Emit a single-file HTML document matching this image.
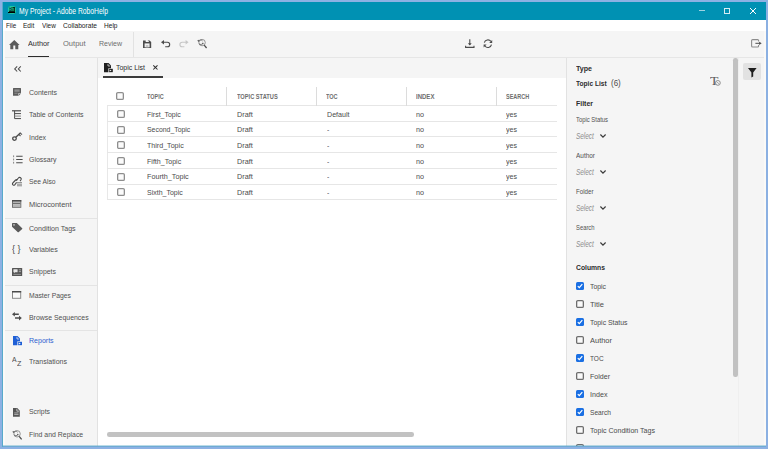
<!DOCTYPE html>
<html><head><meta charset="utf-8"><title>My Project - Adobe RoboHelp</title>
<style>
*{box-sizing:border-box;margin:0;padding:0}
html,body{width:768px;height:449px;overflow:hidden;background:#8db1e3;font-family:"Liberation Sans",sans-serif;color:#4b4b4b}
.a{position:absolute}
.tx{position:absolute;white-space:nowrap;line-height:normal;transform-origin:0 50%}
#win{position:absolute;left:2.5px;top:2px;width:763px;height:443.5px;background:#f5f5f5}
.cb{position:absolute;width:8px;height:8px;border:1px solid #8a8a8a;border-radius:1.5px;background:#fff}
.cbr{position:absolute;width:8px;height:8px;border:1px solid #6e6e6e;border-radius:1.5px;background:#fafafa}
.cbc{position:absolute;width:8px;height:8px;border-radius:1.5px;background:#1a6fe3}
.hl{position:absolute;height:1px;background:#e4e4e4}
.vl{position:absolute;width:1px;background:#e4e4e4}
svg{position:absolute;overflow:visible}
</style></head><body>
<!-- window chrome -->
<div id="win"></div>
<div class="a" id="titlebar" style="left:2.5px;top:2px;width:763px;height:17.5px;background:#0091b3"></div>
<div class="a" id="menubar" style="left:2.5px;top:19.5px;width:763px;height:11.5px;background:#fff"></div>
<div class="a" id="toolbar" style="left:2.5px;top:31px;width:763px;height:26px;background:#f5f5f5"></div>
<div class="hl" style="left:2.5px;top:57px;width:763px;background:#e6e6e6"></div>
<!-- app icon -->
<div class="a" style="left:7.6px;top:6.3px;width:8.4px;height:7.8px;background:#06281f;border:1px solid #1cc6a4;border-radius:1.5px"></div>
<!-- window buttons -->
<div class="a" style="left:8.4px;top:11.9px;width:6.8px;height:1.4px;background:#000"></div>
<div class="a" style="left:698.7px;top:10.4px;width:6px;height:1px;background:#9fd3e2"></div>
<div class="a" style="left:723.7px;top:7.8px;width:6px;height:6px;border:1px solid #d4ecf3"></div>
<svg style="left:749.5px;top:7.8px" width="6" height="6" viewBox="0 0 6 6"><path d="M0 0L6 6M6 0L0 6" stroke="#fff" stroke-width="1" fill="none"/></svg>
<!-- toolbar -->
<div class="a" style="left:27.5px;top:55.6px;width:21.7px;height:1.9px;background:#2c2c2c"></div>
<div class="vl" style="left:133px;top:32px;height:25px;background:#e2e2e2"></div>
<!-- sidebar -->
<div class="vl" style="left:97px;top:58px;height:387.5px;background:#e2e2e2"></div>
<div class="hl" style="left:3px;top:218px;width:94px"></div>
<div class="hl" style="left:3px;top:285.3px;width:94px"></div>
<div class="hl" style="left:3px;top:330px;width:94px"></div>
<!-- center -->
<div class="a" id="main" style="left:98px;top:78px;width:468px;height:367.5px;background:#fff"></div>
<div class="a" style="left:103px;top:75.6px;width:59.5px;height:2px;background:#3c3c3c"></div>
<!-- table -->
<div class="a" id="tbl" style="left:107px;top:87px;width:450px;height:114px;overflow:hidden">
 <div class="vl" style="left:0.3px;top:18.5px;height:94.5px;background:#e8e8e8"></div>
</div>
<div class="hl" style="left:107px;top:105.0px;width:450px;background:#e6e6e6"></div>
<div class="hl" style="left:107px;top:120.7px;width:450px;background:#e6e6e6"></div>
<div class="hl" style="left:107px;top:136.4px;width:450px;background:#e6e6e6"></div>
<div class="hl" style="left:107px;top:152.1px;width:450px;background:#e6e6e6"></div>
<div class="hl" style="left:107px;top:167.8px;width:450px;background:#e6e6e6"></div>
<div class="hl" style="left:107px;top:183.5px;width:450px;background:#e6e6e6"></div>
<div class="hl" style="left:107px;top:199.2px;width:450px;background:#e6e6e6"></div>
<div class="vl" style="left:226.0px;top:87px;height:18.5px;background:#dcdcdc"></div>
<div class="vl" style="left:315.8px;top:87px;height:18.5px;background:#dcdcdc"></div>
<div class="vl" style="left:405.8px;top:87px;height:18.5px;background:#dcdcdc"></div>
<div class="vl" style="left:495.5px;top:87px;height:18.5px;background:#dcdcdc"></div>
<svg style="left:116.2px;top:92.2px" width="8" height="8" viewBox="0 0 8 8"><rect x="0.65" y="0.65" width="6.7" height="6.7" rx="1.2" fill="#fbfbfb" stroke="#8e8e8e" stroke-width="1.3"/></svg>
<svg style="left:116.5px;top:109.8px" width="8" height="8" viewBox="0 0 8 8"><rect x="0.65" y="0.65" width="6.7" height="6.7" rx="1.2" fill="#fbfbfb" stroke="#8e8e8e" stroke-width="1.3"/></svg>
<svg style="left:116.5px;top:125.5px" width="8" height="8" viewBox="0 0 8 8"><rect x="0.65" y="0.65" width="6.7" height="6.7" rx="1.2" fill="#fbfbfb" stroke="#8e8e8e" stroke-width="1.3"/></svg>
<svg style="left:116.5px;top:141.2px" width="8" height="8" viewBox="0 0 8 8"><rect x="0.65" y="0.65" width="6.7" height="6.7" rx="1.2" fill="#fbfbfb" stroke="#8e8e8e" stroke-width="1.3"/></svg>
<svg style="left:116.5px;top:156.9px" width="8" height="8" viewBox="0 0 8 8"><rect x="0.65" y="0.65" width="6.7" height="6.7" rx="1.2" fill="#fbfbfb" stroke="#8e8e8e" stroke-width="1.3"/></svg>
<svg style="left:116.5px;top:172.6px" width="8" height="8" viewBox="0 0 8 8"><rect x="0.65" y="0.65" width="6.7" height="6.7" rx="1.2" fill="#fbfbfb" stroke="#8e8e8e" stroke-width="1.3"/></svg>
<svg style="left:116.5px;top:188.3px" width="8" height="8" viewBox="0 0 8 8"><rect x="0.65" y="0.65" width="6.7" height="6.7" rx="1.2" fill="#fbfbfb" stroke="#8e8e8e" stroke-width="1.3"/></svg>
<!-- bottom scrollbar -->
<div class="a" style="left:107px;top:432px;width:307px;height:4.5px;border-radius:2.25px;background:#c2c2c2"></div>
<!-- right panel -->
<div class="vl" style="left:566px;top:58px;height:387.5px;background:#e2e2e2"></div>
<div class="vl" style="left:738px;top:58px;height:387.5px;background:#efefef"></div>
<div class="a" style="left:733.2px;top:58.4px;width:4.4px;height:318.6px;border-radius:2.2px;background:#c1c1c1"></div>
<div class="a" style="left:743.2px;top:63px;width:17.8px;height:17.3px;border-radius:2px;background:#e2e2e2"></div>
<div class="cbc" style="left:576px;top:282px"></div><svg style="left:576px;top:282px" width="8" height="8" viewBox="0 0 8 8"><path d="M1.8 4.1L3.3 5.7L6.3 2.2" stroke="#fff" stroke-width="1.2" fill="none"/></svg>
<svg style="left:576px;top:300px" width="8" height="8" viewBox="0 0 8 8"><rect x="0.65" y="0.65" width="6.7" height="6.7" rx="1.2" fill="#fafafa" stroke="#6e6e6e" stroke-width="1.3"/></svg>
<div class="cbc" style="left:576px;top:318px"></div><svg style="left:576px;top:318px" width="8" height="8" viewBox="0 0 8 8"><path d="M1.8 4.1L3.3 5.7L6.3 2.2" stroke="#fff" stroke-width="1.2" fill="none"/></svg>
<svg style="left:576px;top:336px" width="8" height="8" viewBox="0 0 8 8"><rect x="0.65" y="0.65" width="6.7" height="6.7" rx="1.2" fill="#fafafa" stroke="#6e6e6e" stroke-width="1.3"/></svg>
<div class="cbc" style="left:576px;top:354px"></div><svg style="left:576px;top:354px" width="8" height="8" viewBox="0 0 8 8"><path d="M1.8 4.1L3.3 5.7L6.3 2.2" stroke="#fff" stroke-width="1.2" fill="none"/></svg>
<svg style="left:576px;top:372px" width="8" height="8" viewBox="0 0 8 8"><rect x="0.65" y="0.65" width="6.7" height="6.7" rx="1.2" fill="#fafafa" stroke="#6e6e6e" stroke-width="1.3"/></svg>
<div class="cbc" style="left:576px;top:390px"></div><svg style="left:576px;top:390px" width="8" height="8" viewBox="0 0 8 8"><path d="M1.8 4.1L3.3 5.7L6.3 2.2" stroke="#fff" stroke-width="1.2" fill="none"/></svg>
<div class="cbc" style="left:576px;top:408px"></div><svg style="left:576px;top:408px" width="8" height="8" viewBox="0 0 8 8"><path d="M1.8 4.1L3.3 5.7L6.3 2.2" stroke="#fff" stroke-width="1.2" fill="none"/></svg>
<svg style="left:576px;top:426px" width="8" height="8" viewBox="0 0 8 8"><rect x="0.65" y="0.65" width="6.7" height="6.7" rx="1.2" fill="#fafafa" stroke="#6e6e6e" stroke-width="1.3"/></svg>
<svg style="left:576px;top:444px" width="8" height="8" viewBox="0 0 8 8"><rect x="0.65" y="0.65" width="6.7" height="6.7" rx="1.2" fill="#fafafa" stroke="#6e6e6e" stroke-width="1.3"/></svg>
<svg style="left:600.1px;top:133.8px" width="6" height="3.8" viewBox="0 0 6 3.8"><path d="M0.4 0.5L3 3.1L5.6 0.5" stroke="#3c3c3c" stroke-width="1.2" fill="none"/></svg>
<svg style="left:600.1px;top:169.9px" width="6" height="3.8" viewBox="0 0 6 3.8"><path d="M0.4 0.5L3 3.1L5.6 0.5" stroke="#3c3c3c" stroke-width="1.2" fill="none"/></svg>
<svg style="left:600.1px;top:205.9px" width="6" height="3.8" viewBox="0 0 6 3.8"><path d="M0.4 0.5L3 3.1L5.6 0.5" stroke="#3c3c3c" stroke-width="1.2" fill="none"/></svg>
<svg style="left:600.1px;top:241.9px" width="6" height="3.8" viewBox="0 0 6 3.8"><path d="M0.4 0.5L3 3.1L5.6 0.5" stroke="#3c3c3c" stroke-width="1.2" fill="none"/></svg>
<!-- home -->
<svg style="left:8.8px;top:39.5px" width="10.6" height="9.2" viewBox="0 0 10.6 9.2"><path d="M5.3 0L10.6 4.9H9.3V9.2H6.3V5.6H4.3V9.2H1.3V4.9H0Z" fill="#5a5a5a"/></svg>
<!-- save -->
<svg style="left:143.4px;top:39.7px" width="8.2" height="8" viewBox="0 0 8.2 8"><path d="M0 0.4H6.6L8.2 2V8H0Z" fill="#4b4b4b"/><rect x="2.7" y="0" width="3.2" height="2" fill="#f5f5f5"/><rect x="4.9" y="0.3" width="0.8" height="0.9" fill="#4b4b4b"/><rect x="1.6" y="3.4" width="5" height="3.9" fill="#efefef"/><rect x="2.8" y="5" width="2.6" height="2.3" fill="#c4c4c4"/></svg>
<!-- undo -->
<svg style="left:160.8px;top:39.8px" width="9.6" height="7.4" viewBox="0 0 9.6 7.4"><path d="M2 2.2H6.4A2.3 2.3 0 0 1 6.4 6.8H4.2" fill="none" stroke="#4b4b4b" stroke-width="1.1"/><path d="M0 2.2L3 0V4.4Z" fill="#4b4b4b"/></svg>
<!-- redo -->
<svg style="left:178.6px;top:39.8px" width="9.6" height="7.4" viewBox="0 0 9.6 7.4"><path d="M7.6 2.2H3.2A2.3 2.3 0 0 0 3.2 6.8H5.4" fill="none" stroke="#c6c6c6" stroke-width="1.1"/><path d="M9.6 2.2L6.6 0V4.4Z" fill="#c6c6c6"/></svg>
<!-- find replace toolbar -->
<svg style="left:196.6px;top:39.2px" width="10" height="9.6" viewBox="0 0 10 9.6"><circle cx="5.1" cy="3.6" r="3.2" fill="none" stroke="#8a8a8a" stroke-width="0.9"/><path d="M7.2 6.2L9.6 9" stroke="#4b4b4b" stroke-width="1.3" fill="none"/><path d="M1.4 2.6A2.4 2.4 0 0 1 5.6 2M6 3.8A2.4 2.4 0 0 1 1.8 4.6" stroke="#6e6e6e" stroke-width="0.9" fill="none"/><path d="M0.2 1.6L2 0.8L1.8 2.9Z" fill="#5a5a5a"/><path d="M6.9 4.8L5.2 5.4L5.4 3.4Z" fill="#5a5a5a"/></svg>
<!-- download -->
<svg style="left:465.3px;top:39px" width="9.6" height="9.2" viewBox="0 0 9.6 9.2"><path d="M4.8 0.2V5.8" stroke="#4b4b4b" stroke-width="1.1" fill="none"/><path d="M2.9 4.2L4.8 6.6L6.7 4.2Z" fill="#4b4b4b"/><path d="M0.6 6.8V8.4H9V6.8" stroke="#4b4b4b" stroke-width="1.1" fill="none"/></svg>
<!-- refresh -->
<svg style="left:483.2px;top:39px" width="9.8" height="9.4" viewBox="0 0 9.8 9.4"><path d="M1.3 3.7A3.7 3.7 0 0 1 7.9 2.4M8.5 5.6A3.7 3.7 0 0 1 1.9 7" stroke="#4b4b4b" stroke-width="1.1" fill="none"/><path d="M9.2 0.9V3.9H6.2Z" fill="#4b4b4b"/><path d="M0.6 8.5V5.5H3.6Z" fill="#4b4b4b"/></svg>
<!-- logout -->
<svg style="left:751px;top:39.4px" width="11" height="8.6" viewBox="0 0 11 8.6"><path d="M7.6 2.6V1.6A1 1 0 0 0 6.6 0.6H1.6A1 1 0 0 0 0.6 1.6V7A1 1 0 0 0 1.6 8H6.6A1 1 0 0 0 7.6 7V6" fill="none" stroke="#8c8c8c" stroke-width="1.1"/><path d="M4.4 4.3H9" stroke="#4b4b4b" stroke-width="1" fill="none"/><path d="M8.2 2.7L10.7 4.3L8.2 5.9Z" fill="#4b4b4b"/></svg>
<!-- collapse chevrons -->
<svg style="left:13.8px;top:66.2px" width="7.4" height="5.8" viewBox="0 0 7.4 5.8"><path d="M3.2 0.3L0.7 2.9L3.2 5.5M6.8 0.3L4.3 2.9L6.8 5.5" fill="none" stroke="#4b4b4b" stroke-width="1.05"/></svg>
<!-- tab icon (report, black) -->
<svg style="left:104.2px;top:63px" width="8.8" height="9.2" viewBox="0 0 8.8 9.2"><path d="M0 0H4.6L7 2.4V5.2H4.4V9.2H0Z" fill="#1e1e1e"/><path d="M4 0.8V3H6.2" fill="none" stroke="#f5f5f5" stroke-width="0.7"/><path d="M5 5.8H8.8V9.2H5Z" fill="#1e1e1e"/><path d="M5.6 6.4L7.6 7.5L5.6 8.6Z" fill="#f5f5f5"/></svg>
<!-- tab close -->
<svg style="left:152.6px;top:65px" width="4.8" height="4.8" viewBox="0 0 4.8 4.8"><path d="M0.3 0.3L4.5 4.5M4.5 0.3L0.3 4.5" stroke="#2c2c2c" stroke-width="1.05" fill="none"/></svg>
<!-- contents -->
<svg style="left:13px;top:88.2px" width="8" height="7.8" viewBox="0 0 8 7.8"><path d="M0.4 0H7.6A0.4 0.4 0 0 1 8 0.4V5.6L5.8 7.8H0.4A0.4 0.4 0 0 1 0 7.4V0.4A0.4 0.4 0 0 1 0.4 0Z" fill="#5c5c5c"/><rect x="1.4" y="1.4" width="5.2" height="2.4" fill="#8e8e8e"/><rect x="1.4" y="4.8" width="3.2" height="0.8" fill="#9a9a9a"/><path d="M5.6 7.6V5.4H7.9" fill="none" stroke="#f5f5f5" stroke-width="0.6"/></svg>
<!-- toc -->
<svg style="left:12px;top:109.8px" width="9" height="9.2" viewBox="0 0 9 9.2"><path d="M0 0.8H9" stroke="#4b4b4b" stroke-width="1.2" fill="none"/><path d="M2.6 0.8V8.6H9M2.6 3.6H9" stroke="#4b4b4b" stroke-width="1" fill="none"/><path d="M2.6 6.1H9" stroke="#8a8a8a" stroke-width="1" fill="none"/></svg>
<!-- index key -->
<svg style="left:11.6px;top:132px" width="10.4" height="9" viewBox="0 0 10.4 9"><circle cx="2.5" cy="6.6" r="1.8" fill="none" stroke="#4b4b4b" stroke-width="1.3"/><path d="M3.8 5.3L8.6 0.7" stroke="#4b4b4b" stroke-width="1.4" fill="none"/><path d="M8.2 1L10 2.6M6.9 2.5L8.6 4" stroke="#5a5a5a" stroke-width="1.1" fill="none"/></svg>
<!-- glossary -->
<svg style="left:12.6px;top:154.8px" width="9.6" height="9" viewBox="0 0 9.6 9"><path d="M3.2 1.3H9.6M3.2 4.5H9.6M3.2 7.7H9.6" stroke="#4b4b4b" stroke-width="1.1" fill="none"/><path d="M0.6 0.4V2.2M0.6 3.6V5.4M0.6 6.8V8.6" stroke="#7a7a7a" stroke-width="0.9" fill="none"/></svg>
<!-- see also -->
<svg style="left:12.2px;top:176.8px" width="10.2" height="9.8" viewBox="0 0 10.2 9.8"><path d="M4.6 5.4L2.6 8.1A1.5 1.5 0 0 1 0.5 6.3L3.6 3A1.4 1.4 0 0 1 5.4 3" fill="none" stroke="#4b4b4b" stroke-width="1.1"/><path d="M4.2 3.6L6.4 1A1.6 1.6 0 0 1 8.9 3L8 4.2" fill="none" stroke="#4b4b4b" stroke-width="1.1"/><path d="M5 5.6H10M5 7.2H10M5 8.8H10" stroke="#8a8a8a" stroke-width="1" fill="none"/></svg>
<!-- microcontent -->
<svg style="left:12.1px;top:200px" width="9.3" height="7.8" viewBox="0 0 9.3 7.8"><rect x="0.5" y="0.5" width="8.3" height="6.8" fill="#d2d2d2" stroke="#6e6e6e" stroke-width="1"/><rect x="0" y="0" width="9.3" height="1.6" fill="#4b4b4b"/><rect x="1" y="2.7" width="7.3" height="1.5" fill="#6e6e6e"/><rect x="1" y="5.2" width="7.3" height="1.6" fill="#b0b0b0"/></svg>
<!-- condition tags -->
<svg style="left:11.8px;top:223.2px" width="10.4" height="9.4" viewBox="0 0 10.4 9.4"><path d="M0 0.5A0.5 0.5 0 0 1 0.5 0H4.8L10.2 5.2A0.5 0.5 0 0 1 10.2 5.9L6.6 9.2A0.5 0.5 0 0 1 5.9 9.2L0 3.8Z" fill="#5a5a5a"/><circle cx="2" cy="1.9" r="0.8" fill="#cfcfcf"/></svg>
<!-- snippets -->
<svg style="left:11.8px;top:267.6px" width="10.2" height="8" viewBox="0 0 10.2 8"><rect x="0" y="0" width="10.2" height="8" rx="0.5" fill="#555"/><path d="M1.4 1.3H5.6V4.2H3.2L2.2 5.2V4.2H1.4Z" fill="#e6e6e6"/><rect x="6.8" y="1.4" width="2.2" height="0.9" fill="#b0b0b0"/><rect x="6.8" y="3.2" width="2.2" height="0.9" fill="#b0b0b0"/><rect x="1.4" y="5.9" width="7.6" height="0.9" fill="#9a9a9a"/></svg>
<!-- master pages -->
<svg style="left:12.2px;top:291.2px" width="9.2" height="7.8" viewBox="0 0 9.2 7.8"><rect x="0.5" y="0.5" width="8.2" height="6.8" fill="#fafafa" stroke="#8a8a8a" stroke-width="1"/><rect x="0" y="0" width="9.2" height="1.5" fill="#4b4b4b"/></svg>
<!-- browse sequences -->
<svg style="left:12.2px;top:312.2px" width="9.8" height="8.4" viewBox="0 0 9.8 8.4"><path d="M2 2.3H6.8M3 6.1H7.8" stroke="#4b4b4b" stroke-width="1.5" fill="none"/><path d="M0 2.3L2.8 0V4.6Z" fill="#4b4b4b"/><path d="M9.8 6.1L7 3.8V8.4Z" fill="#4b4b4b"/></svg>
<!-- reports (blue) -->
<svg style="left:13.2px;top:335.8px" width="9" height="9.2" viewBox="0 0 9 9.2"><path d="M0 0H4.6L7 2.4V5.2H4.4V9.2H0Z" fill="#1f5fd6"/><path d="M4 0.8V3H6.2" fill="none" stroke="#f5f5f5" stroke-width="0.7"/><path d="M5 5.8H9V9.2H5Z" fill="#1f5fd6"/><path d="M5.7 6.4L7.8 7.5L5.7 8.6Z" fill="#f5f5f5"/></svg>
<!-- scripts -->
<svg style="left:13.3px;top:407.5px" width="6.8" height="8.7" viewBox="0 0 7.6 8.8" preserveAspectRatio="none"><path d="M0 0H4.8L7.6 2.8V8.8H0Z" fill="#555"/><path d="M4.3 0.7V3.2H6.9" fill="none" stroke="#f5f5f5" stroke-width="0.7"/><path d="M1.4 5H6.2M1.4 6.6H6.2" stroke="#c8c8c8" stroke-width="0.8" fill="none"/></svg>
<!-- find and replace sidebar -->
<svg style="left:12px;top:429.6px" width="10" height="9.8" viewBox="0 0 10 9.8"><circle cx="5.1" cy="3.8" r="3.2" fill="none" stroke="#8a8a8a" stroke-width="0.9"/><path d="M7.2 6.4L9.6 9.3" stroke="#4b4b4b" stroke-width="1.3" fill="none"/><path d="M1.4 2.8A2.4 2.4 0 0 1 5.6 2.2M6 4A2.4 2.4 0 0 1 1.8 4.8" stroke="#6e6e6e" stroke-width="0.9" fill="none"/><path d="M0.2 1.8L2 1L1.8 3.1Z" fill="#5a5a5a"/><path d="M6.9 5L5.2 5.6L5.4 3.6Z" fill="#5a5a5a"/></svg>
<!-- funnel -->
<svg style="left:747.8px;top:67.5px" width="8.6" height="9.6" viewBox="0 0 8.6 9.6"><path d="M0 0H8.6L5.2 4.4V8.6L3.4 9.6V4.4Z" fill="#1e1e1e"/></svg>
<!-- T clock circle -->
<svg style="left:715.4px;top:80.4px" width="5.8" height="5.8" viewBox="0 0 5.8 5.8"><circle cx="2.9" cy="2.9" r="2.4" fill="#f5f5f5" stroke="#7a7a7a" stroke-width="0.8"/><path d="M1.6 1.8L4.2 3.9" stroke="#8a8a8a" stroke-width="0.7" fill="none"/></svg>

<span class="tx" id="t0" style="left:19.2px;top:6.00px;font-size:8.6px;color:#ffffff;transform:scaleX(0.7861);">My Project - Adobe RoboHelp</span>
<span class="tx" id="t1" style="left:6.0px;top:21.00px;font-size:7.5px;color:#1a1a1a;transform:scaleX(0.8434);">File</span>
<span class="tx" id="t2" style="left:22.9px;top:21.00px;font-size:7.5px;color:#1a1a1a;transform:scaleX(0.8657);">Edit</span>
<span class="tx" id="t3" style="left:41.6px;top:21.00px;font-size:7.5px;color:#1a1a1a;transform:scaleX(0.8558);">View</span>
<span class="tx" id="t4" style="left:62.6px;top:21.00px;font-size:7.5px;color:#1a1a1a;transform:scaleX(0.8864);">Collaborate</span>
<span class="tx" id="t5" style="left:104.1px;top:21.00px;font-size:7.5px;color:#1a1a1a;transform:scaleX(0.8745);">Help</span>
<span class="tx" id="t6" style="left:27.5px;top:39.00px;font-size:8px;color:#2c2c2c;transform:scaleX(0.9119);">Author</span>
<span class="tx" id="t7" style="left:62.5px;top:39.00px;font-size:8px;color:#6e6e6e;transform:scaleX(0.9411);">Output</span>
<span class="tx" id="t8" style="left:98.8px;top:39.00px;font-size:8px;color:#6e6e6e;transform:scaleX(0.8767);">Review</span>
<span class="tx" id="t9" style="left:115.6px;top:63.00px;font-size:8px;color:#2c2c2c;transform:scaleX(0.8693);">Topic List</span>
<span class="tx" id="t10" style="left:28.8px;top:88.00px;font-size:7.9px;color:#505050;transform:scaleX(0.8863);">Contents</span>
<span class="tx" id="t11" style="left:28.8px;top:110.00px;font-size:7.9px;color:#505050;transform:scaleX(0.8889);">Table of Contents</span>
<span class="tx" id="t12" style="left:28.8px;top:133.00px;font-size:7.9px;color:#505050;transform:scaleX(0.8803);">Index</span>
<span class="tx" id="t13" style="left:28.8px;top:155.00px;font-size:7.9px;color:#505050;transform:scaleX(0.8831);">Glossary</span>
<span class="tx" id="t14" style="left:28.8px;top:177.00px;font-size:7.9px;color:#505050;transform:scaleX(0.8538);">See Also</span>
<span class="tx" id="t15" style="left:28.8px;top:200.00px;font-size:7.9px;color:#505050;transform:scaleX(0.9409);">Microcontent</span>
<span class="tx" id="t16" style="left:28.8px;top:224.00px;font-size:7.9px;color:#505050;transform:scaleX(0.8951);">Condition Tags</span>
<span class="tx" id="t17" style="left:28.8px;top:245.00px;font-size:7.9px;color:#505050;transform:scaleX(0.8913);">Variables</span>
<span class="tx" id="t18" style="left:28.8px;top:267.00px;font-size:7.9px;color:#505050;transform:scaleX(0.8789);">Snippets</span>
<span class="tx" id="t19" style="left:28.8px;top:291.00px;font-size:7.9px;color:#505050;transform:scaleX(0.8626);">Master Pages</span>
<span class="tx" id="t20" style="left:28.8px;top:313.00px;font-size:7.9px;color:#505050;transform:scaleX(0.8765);">Browse Sequences</span>
<span class="tx" id="t21" style="left:28.8px;top:336.00px;font-size:7.9px;color:#2f62d0;transform:scaleX(0.8900);">Reports</span>
<span class="tx" id="t22" style="left:28.8px;top:357.00px;font-size:7.9px;color:#505050;transform:scaleX(0.8902);">Translations</span>
<span class="tx" id="t23" style="left:28.8px;top:407.00px;font-size:7.9px;color:#505050;transform:scaleX(0.8705);">Scripts</span>
<span class="tx" id="t24" style="left:28.8px;top:430.00px;font-size:7.9px;color:#505050;transform:scaleX(0.8762);">Find and Replace</span>
<span class="tx" id="t25" style="left:147.2px;top:93.00px;font-size:6.3px;color:#6e6e6e;font-weight:bold;transform:scaleX(0.8673);">TOPIC</span>
<span class="tx" id="t26" style="left:236.9px;top:93.00px;font-size:6.3px;color:#6e6e6e;font-weight:bold;transform:scaleX(0.9016);">TOPIC STATUS</span>
<span class="tx" id="t27" style="left:326.2px;top:93.00px;font-size:6.3px;color:#6e6e6e;font-weight:bold;transform:scaleX(0.8796);">TOC</span>
<span class="tx" id="t28" style="left:416.2px;top:93.00px;font-size:6.3px;color:#6e6e6e;font-weight:bold;transform:scaleX(0.9558);">INDEX</span>
<span class="tx" id="t29" style="left:505.5px;top:93.00px;font-size:6.3px;color:#6e6e6e;font-weight:bold;transform:scaleX(0.8724);">SEARCH</span>
<span class="tx" id="t30" style="left:147.3px;top:110.00px;font-size:7.8px;color:#4b4b4b;transform:scaleX(0.8965);">First_Topic</span>
<span class="tx" id="t31" style="left:236.8px;top:110.00px;font-size:7.8px;color:#4b4b4b;transform:scaleX(0.9287);">Draft</span>
<span class="tx" id="t32" style="left:326.6px;top:110.00px;font-size:7.8px;color:#4b4b4b;transform:scaleX(0.9102);">Default</span>
<span class="tx" id="t33" style="left:416.4px;top:110.00px;font-size:7.8px;color:#4b4b4b;transform:scaleX(0.9209);">no</span>
<span class="tx" id="t34" style="left:505.8px;top:110.00px;font-size:7.8px;color:#4b4b4b;transform:scaleX(0.9060);">yes</span>
<span class="tx" id="t35" style="left:147.3px;top:125.00px;font-size:7.8px;color:#4b4b4b;transform:scaleX(0.8840);">Second_Topic</span>
<span class="tx" id="t36" style="left:236.8px;top:125.00px;font-size:7.8px;color:#4b4b4b;transform:scaleX(0.9287);">Draft</span>
<span class="tx" id="t37" style="left:326.6px;top:125.00px;font-size:7.8px;color:#4b4b4b;transform:scaleX(0.8814);">-</span>
<span class="tx" id="t38" style="left:416.4px;top:125.00px;font-size:7.8px;color:#4b4b4b;transform:scaleX(0.9209);">no</span>
<span class="tx" id="t39" style="left:505.8px;top:125.00px;font-size:7.8px;color:#4b4b4b;transform:scaleX(0.9060);">yes</span>
<span class="tx" id="t40" style="left:147.3px;top:141.00px;font-size:7.8px;color:#4b4b4b;transform:scaleX(0.9104);">Third_Topic</span>
<span class="tx" id="t41" style="left:236.8px;top:141.00px;font-size:7.8px;color:#4b4b4b;transform:scaleX(0.9287);">Draft</span>
<span class="tx" id="t42" style="left:326.6px;top:141.00px;font-size:7.8px;color:#4b4b4b;transform:scaleX(0.8814);">-</span>
<span class="tx" id="t43" style="left:416.4px;top:141.00px;font-size:7.8px;color:#4b4b4b;transform:scaleX(0.9209);">no</span>
<span class="tx" id="t44" style="left:505.8px;top:141.00px;font-size:7.8px;color:#4b4b4b;transform:scaleX(0.9060);">yes</span>
<span class="tx" id="t45" style="left:147.3px;top:157.00px;font-size:7.8px;color:#4b4b4b;transform:scaleX(0.9071);">Fifth_Topic</span>
<span class="tx" id="t46" style="left:236.8px;top:157.00px;font-size:7.8px;color:#4b4b4b;transform:scaleX(0.9287);">Draft</span>
<span class="tx" id="t47" style="left:326.6px;top:157.00px;font-size:7.8px;color:#4b4b4b;transform:scaleX(0.8814);">-</span>
<span class="tx" id="t48" style="left:416.4px;top:157.00px;font-size:7.8px;color:#4b4b4b;transform:scaleX(0.9209);">no</span>
<span class="tx" id="t49" style="left:505.8px;top:157.00px;font-size:7.8px;color:#4b4b4b;transform:scaleX(0.9060);">yes</span>
<span class="tx" id="t50" style="left:147.3px;top:172.00px;font-size:7.8px;color:#4b4b4b;transform:scaleX(0.9251);">Fourth_Topic</span>
<span class="tx" id="t51" style="left:236.8px;top:172.00px;font-size:7.8px;color:#4b4b4b;transform:scaleX(0.9287);">Draft</span>
<span class="tx" id="t52" style="left:326.6px;top:172.00px;font-size:7.8px;color:#4b4b4b;transform:scaleX(0.8814);">-</span>
<span class="tx" id="t53" style="left:416.4px;top:172.00px;font-size:7.8px;color:#4b4b4b;transform:scaleX(0.9209);">no</span>
<span class="tx" id="t54" style="left:505.8px;top:172.00px;font-size:7.8px;color:#4b4b4b;transform:scaleX(0.9060);">yes</span>
<span class="tx" id="t55" style="left:147.3px;top:188.00px;font-size:7.8px;color:#4b4b4b;transform:scaleX(0.8978);">Sixth_Topic</span>
<span class="tx" id="t56" style="left:236.8px;top:188.00px;font-size:7.8px;color:#4b4b4b;transform:scaleX(0.9287);">Draft</span>
<span class="tx" id="t57" style="left:326.6px;top:188.00px;font-size:7.8px;color:#4b4b4b;transform:scaleX(0.8814);">-</span>
<span class="tx" id="t58" style="left:416.4px;top:188.00px;font-size:7.8px;color:#4b4b4b;transform:scaleX(0.9209);">no</span>
<span class="tx" id="t59" style="left:505.8px;top:188.00px;font-size:7.8px;color:#4b4b4b;transform:scaleX(0.9060);">yes</span>
<span class="tx" id="t60" style="left:576.1px;top:64.00px;font-size:7.8px;color:#2c2c2c;font-weight:bold;transform:scaleX(0.9078);">Type</span>
<span class="tx" id="t61" style="left:576.1px;top:79.00px;font-size:7.8px;color:#2c2c2c;font-weight:bold;transform:scaleX(0.8469);">Topic List</span>
<span class="tx" id="t62" style="left:611.1px;top:78.00px;font-size:8.8px;color:#4b4b4b;transform:scaleX(0.9103);">(6)</span>
<span class="tx" id="t63" style="left:576.1px;top:99.00px;font-size:7.8px;color:#2c2c2c;font-weight:bold;transform:scaleX(0.8918);">Filter</span>
<span class="tx" id="t64" style="left:576.2px;top:116.00px;font-size:6.5px;color:#505050;transform:scaleX(0.9034);">Topic Status</span>
<span class="tx" id="t65" style="left:575.8px;top:131.00px;font-size:8.8px;color:#8e8e8e;font-style:italic;transform:scaleX(0.7279);">Select</span>
<span class="tx" id="t66" style="left:576.2px;top:152.00px;font-size:6.5px;color:#505050;transform:scaleX(0.9918);">Author</span>
<span class="tx" id="t67" style="left:575.8px;top:167.00px;font-size:8.8px;color:#8e8e8e;font-style:italic;transform:scaleX(0.7279);">Select</span>
<span class="tx" id="t68" style="left:576.2px;top:188.00px;font-size:6.5px;color:#505050;transform:scaleX(0.9492);">Folder</span>
<span class="tx" id="t69" style="left:575.8px;top:203.00px;font-size:8.8px;color:#8e8e8e;font-style:italic;transform:scaleX(0.7279);">Select</span>
<span class="tx" id="t70" style="left:576.2px;top:224.00px;font-size:6.5px;color:#505050;transform:scaleX(0.8976);">Search</span>
<span class="tx" id="t71" style="left:575.8px;top:239.00px;font-size:8.8px;color:#8e8e8e;font-style:italic;transform:scaleX(0.7279);">Select</span>
<span class="tx" id="t72" style="left:576.1px;top:263.00px;font-size:7.8px;color:#2c2c2c;font-weight:bold;transform:scaleX(0.8693);">Columns</span>
<span class="tx" id="t73" style="left:589.7px;top:282.00px;font-size:7.9px;color:#4b4b4b;transform:scaleX(0.8685);">Topic</span>
<span class="tx" id="t74" style="left:589.7px;top:300.00px;font-size:7.9px;color:#4b4b4b;transform:scaleX(0.9573);">Title</span>
<span class="tx" id="t75" style="left:589.7px;top:318.00px;font-size:7.9px;color:#4b4b4b;transform:scaleX(0.8724);">Topic Status</span>
<span class="tx" id="t76" style="left:589.7px;top:336.00px;font-size:7.9px;color:#4b4b4b;transform:scaleX(0.9462);">Author</span>
<span class="tx" id="t77" style="left:589.7px;top:354.00px;font-size:7.9px;color:#4b4b4b;transform:scaleX(0.8235);">TOC</span>
<span class="tx" id="t78" style="left:589.7px;top:372.00px;font-size:7.9px;color:#4b4b4b;transform:scaleX(0.8939);">Folder</span>
<span class="tx" id="t79" style="left:589.7px;top:390.00px;font-size:7.9px;color:#4b4b4b;transform:scaleX(0.9061);">Index</span>
<span class="tx" id="t80" style="left:589.7px;top:408.00px;font-size:7.9px;color:#4b4b4b;transform:scaleX(0.8395);">Search</span>
<span class="tx" id="t81" style="left:589.7px;top:426.00px;font-size:7.9px;color:#4b4b4b;transform:scaleX(0.8944);">Topic Condition Tags</span>
<span class="tx" id="t82" style="left:589.7px;top:444.00px;font-size:7.9px;color:#4b4b4b;transform:scaleX(0.8792);">Content Condition Tags</span>
<span class="tx" id="t83" style="left:12.4px;top:244.00px;font-size:9px;color:#4b4b4b;transform:scaleX(1.0099);">{ }</span>
<span class="tx" id="t84" style="left:12.0px;top:355.00px;font-size:7.6px;color:#4b4b4b;transform:scaleX(0.9058);">A</span>
<span class="tx" id="t85" style="left:16.8px;top:359.00px;font-size:7.8px;color:#4b4b4b;transform:scaleX(0.9233);">Z</span>
<span class="tx" id="t86" style="left:709.6px;top:74.00px;font-size:12px;color:#5a5a5a;transform:scaleX(1.1438);font-family:'Liberation Serif',serif;">T</span>
<span class="tx" id="t87" style="left:9.1px;top:7.00px;font-size:4.8px;color:#22c9a6;font-weight:bold;transform:scaleX(0.8117);">Rh</span>
<!-- outer border overlay -->
<div class="a" style="left:3px;top:31px;width:1.6px;height:414.6px;background:#fbfaf8"></div>
<div class="a" style="left:764px;top:31px;width:2px;height:414.6px;background:#faf9f7"></div>
<div class="a" style="left:0;top:445px;width:768px;height:1px;background:rgba(79,166,198,0.4)"></div>
<div class="a" style="left:0;top:446px;width:768px;height:1px;background:#6eabd4"></div>
<div class="a" style="left:0;top:447px;width:768px;height:2px;background:#8db1e3"></div>
<div class="a" style="left:0;top:2px;width:3px;height:444.5px;background:#58aacb"></div>
<div class="a" style="left:0;top:0;width:768px;height:2px;background:#8db1e3"></div>
<div class="a" style="left:0;top:0;width:2px;height:449px;background:#8db1e3"></div>
<div class="a" style="left:765.7px;top:0;width:2.3px;height:449px;background:#8bb0e2"></div>
</body></html>
